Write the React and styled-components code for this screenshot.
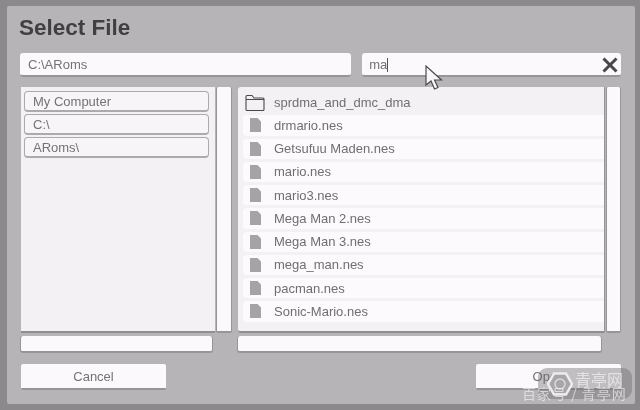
import React from 'react';
import styled, { createGlobalStyle } from 'styled-components';

const Global = createGlobalStyle`
  html, body { margin: 0; padding: 0; background: #8b898b; }
  body { font-family: "Liberation Sans", Arial, sans-serif; overflow: hidden; }
`;

const Screen = styled.div`
  position: relative;
  width: 640px;
  height: 410px;
  box-sizing: border-box;
  padding: 6px 5px 6px 7px;
  background: #8b898b;
  filter: blur(0.55px);
`;

const Dialog = styled.div`
  width: 100%;
  height: 100%;
  box-sizing: border-box;
  padding: 0 14px 0 13px;
  background: #b6b4b6;
  border-radius: 2px;
  display: flex;
  flex-direction: column;
`;

const Title = styled.h1`
  margin: 9px 0 0 -1px;
  height: 26px;
  line-height: 26px;
  font-size: 22.5px;
  font-weight: 700;
  color: #413f42;
`;

const InputRow = styled.div`
  display: flex;
  gap: 11px;
  margin-top: 12px;
  height: 24px;
`;

const Field = styled.div`
  box-sizing: border-box;
  flex: ${(p) => p.$grow} 0 0;
  background: #fbf9fb;
  border-bottom: 2px solid #979598;
  border-radius: 3px;
  padding: 1px 3px 0 ${(p) => p.$left}px;
  display: flex;
  align-items: center;
  justify-content: space-between;
  font-size: 13px;
  color: #747275;
`;

const Caret = styled.span`
  display: inline-block;
  width: 1px;
  height: 14px;
  background: #555;
  vertical-align: -3px;
`;

const Panes = styled.div`
  display: grid;
  grid-template-columns: 194px 16px 372px 15px;
  column-gap: 1px;
  margin-top: 10px;
  margin-left: 1px;
  height: 246px;
`;

const LeftPane = styled.div`
  background: #f3f1f3;
  border-bottom: 2px solid #8f8d90;
  padding: 4px 6px 0 3px;
  display: flex;
  flex-direction: column;
  gap: 2px;
`;

const Scrollbar = styled.div`
  background: #fbf9fb;
  border: 1px solid #979598;
  border-top-width: 0;
  border-bottom-width: 2px;
  border-radius: 2px;
  box-sizing: border-box;
`;

const Crumb = styled.div`
  height: 21px;
  box-sizing: border-box;
  border: 1px solid #acaaad;
  border-bottom-width: 2px;
  border-radius: 4px;
  background: #f7f5f7;
  padding-left: 8px;
  line-height: 19px;
  font-size: 13px;
  color: #747275;
`;

const RightPane = styled.div`
  margin-left: 5px;
  background: #f3f1f3;
  border-bottom: 2px solid #8f8d90;
  border-right: 1px solid #979598;
  border-radius: 3px 0 0 3px;
  padding: 5px 0 0 5px;
  display: flex;
  flex-direction: column;
  gap: 3px;
`;

const Row = styled.div`
  height: 20.25px;
  flex: none;
  background: ${(p) => (p.$folder ? 'transparent' : '#fcfafc')};
  border-radius: 4px 0 0 4px;
  display: flex;
  align-items: center;
  gap: ${(p) => (p.$folder ? 9 : 13)}px;
  padding-left: ${(p) => (p.$folder ? 2 : 7)}px;
  font-size: 13px;
  color: #706e71;
`;

const BottomRow = styled.div`
  display: grid;
  grid-template-columns: 193px 365px;
  column-gap: 24px;
  margin-top: 3px;
  height: 17px;
`;

const HScroll = styled.div`
  background: #fbf9fb;
  border: 1px solid #979598;
  border-top-width: 0;
  border-bottom-width: 2px;
  border-radius: 3px;
  box-sizing: border-box;
`;

const Buttons = styled.div`
  display: flex;
  justify-content: space-between;
  margin: 11px 0 0 1px;
`;

const Button = styled.div`
  width: 145px;
  height: 26px;
  box-sizing: border-box;
  background: #fbf9fb;
  border-bottom: 2px solid #979598;
  border-radius: 2px;
  text-align: center;
  line-height: 26px;
  font-size: 13px;
  color: #747275;
`;

const Cursor = styled.svg`
  position: absolute;
  left: 424px;
  top: 65px;
`;

const Watermark = styled.div`
  position: absolute;
  left: 538px;
  top: 368px;
  width: 94px;
  height: 31px;
  background: rgba(105, 103, 106, 0.4);
  border-radius: 9px;
`;

const Logo = styled.svg`
  position: absolute;
  left: 9px;
  top: 3px;
`;

const WaterName = styled.span`
  position: absolute;
  left: 37px;
  top: 4px;
  font-family: "Noto Sans CJK SC", sans-serif;
  font-size: 16px;
  line-height: 15px;
  color: rgba(240, 238, 240, 0.75);
`;

const WaterCredit = styled.div`
  position: absolute;
  left: 522px;
  top: 387px;
  font-family: "Noto Sans CJK SC", sans-serif;
  font-size: 14px;
  line-height: 12px;
  letter-spacing: 1px;
  white-space: nowrap;
  color: rgba(240, 238, 240, 0.7);
`;

const FolderIcon = () => (
  <svg width="20" height="17" viewBox="0 0 20 17">
    <path
      d="M1 15.5V2.5a1 1 0 0 1 1-1h5l2 2.500h9a1 1 0 0 1 1 1v10.500a1 1 0 0 1-1 1H2a1 1 0 0 1-1-1zM1 5.500h18"
      fill="none"
      stroke="#4a484b"
      strokeWidth="1.1"
    />
  </svg>
);

const FileIcon = () => (
  <svg width="11" height="14" viewBox="0 0 11 14">
    <path d="M0 0h7.500L11 3.500V14H0z" fill="#a5a3a6" />
  </svg>
);

const crumbs = ['My Computer', 'C:\\', 'ARoms\\'];
const files = [
  'drmario.nes',
  'Getsufuu Maden.nes',
  'mario.nes',
  'mario3.nes',
  'Mega Man 2.nes',
  'Mega Man 3.nes',
  'mega_man.nes',
  'pacman.nes',
  'Sonic-Mario.nes',
];

export default function App() {
  return (
    <Screen>
      <Global />
      <Dialog>
        <Title>Select File</Title>
        <InputRow>
          <Field $grow={332} $left={8}>C:\ARoms</Field>
          <Field $grow={258} $left={7}>
            <span>ma<Caret /></span>
            <svg width="16" height="16" viewBox="0 0 16 16">
              <path d="M1.500 1.500l13 13M14.500 1.500l-13 13" stroke="#48464a" strokeWidth="3" fill="none" />
            </svg>
          </Field>
        </InputRow>
        <Panes>
          <LeftPane>
            {crumbs.map((c) => (
              <Crumb key={c}>{c}</Crumb>
            ))}
          </LeftPane>
          <Scrollbar />
          <RightPane>
            <Row $folder>
              <FolderIcon />
              sprdma_and_dmc_dma
            </Row>
            {files.map((f) => (
              <Row key={f}>
                <FileIcon />
                {f}
              </Row>
            ))}
          </RightPane>
          <Scrollbar />
        </Panes>
        <BottomRow>
          <HScroll />
          <HScroll />
        </BottomRow>
        <Buttons>
          <Button>Cancel</Button>
          <Button>Open</Button>
        </Buttons>
      </Dialog>
      <Cursor width="20" height="26" viewBox="0 0 20 26">
        <path
          d="M2 1v19l5-4 3.500 8 3.500-1.500-3.500-7.500h7z"
          fill="#f8f6f8"
          stroke="#4c4a4d"
          strokeWidth="1.2"
        />
      </Cursor>
      <Watermark>
        <Logo width="26" height="26" viewBox="0 0 26 26">
          <path d="M7 2.500h12l6 10.500-6 10.500H7L1 13z" fill="#a8a6a9" stroke="#eeecee" strokeWidth="2.5" />
          <circle cx="13" cy="13" r="5" fill="none" stroke="#dcdadc" strokeWidth="1.5" />
        </Logo>
        <WaterName>青亭网</WaterName>
      </Watermark>
      <WaterCredit>百家号 / 青亭网</WaterCredit>
    </Screen>
  );
}
